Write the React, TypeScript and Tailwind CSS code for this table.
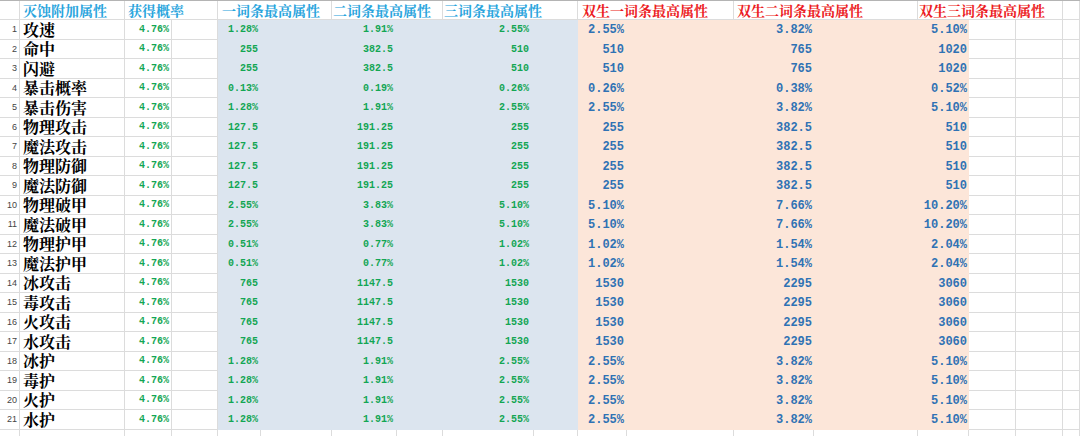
import React from 'react';

// spreadsheet column widths (px), written out as full class names
const colW = [
  'w-[20px]', 'w-[105px]', 'w-[47px]', 'w-[46px]', 'w-[43px]', 'w-[71px]',
  'w-[65px]', 'w-[46px]', 'w-[91px]', 'w-[44px]', 'w-[49px]', 'w-[107px]',
  'w-[80px]', 'w-[104px]', 'w-[51px]', 'w-[47px]', 'w-[47px]', 'w-[17px]',
];

// header cells span several columns where the text runs over
const headers = [
  { w: 'w-[20px]', text: '', cls: '' },
  { w: 'w-[105px]', text: '灭蚀附加属性', cls: 'pl-[3px] text-[#2aa5dd]' },
  { w: 'w-[93px]', text: '获得概率', cls: 'pl-[3px] text-[#2aa5dd]' },
  { w: 'w-[114px]', text: '一词条最高属性', cls: 'pl-[4px] text-[#2aa5dd]' },
  { w: 'w-[111px]', text: '二词条最高属性', cls: 'pl-[1px] text-[#2aa5dd]' },
  { w: 'w-[135px]', text: '三词条最高属性', cls: 'pl-[1px] text-[#2aa5dd]' },
  { w: 'w-[156px]', text: '双生一词条最高属性', cls: 'pl-[4px] text-[#ec1c24]' },
  { w: 'w-[184px]', text: '双生二词条最高属性', cls: 'pl-[3px] text-[#ec1c24]' },
  { w: 'w-[145px]', text: '双生三词条最高属性', cls: 'pl-[1px] text-[#ec1c24]' },
  { w: 'w-[17px]', text: '', cls: '' },
];

type Row = [string, string, string, string, string, string, string];

const rows: Row[] = [
  ['攻速', '1.28%', '1.91%', '2.55%', '2.55%', '3.82%', '5.10%'],
  ['命中', '255', '382.5', '510', '510', '765', '1020'],
  ['闪避', '255', '382.5', '510', '510', '765', '1020'],
  ['暴击概率', '0.13%', '0.19%', '0.26%', '0.26%', '0.38%', '0.52%'],
  ['暴击伤害', '1.28%', '1.91%', '2.55%', '2.55%', '3.82%', '5.10%'],
  ['物理攻击', '127.5', '191.25', '255', '255', '382.5', '510'],
  ['魔法攻击', '127.5', '191.25', '255', '255', '382.5', '510'],
  ['物理防御', '127.5', '191.25', '255', '255', '382.5', '510'],
  ['魔法防御', '127.5', '191.25', '255', '255', '382.5', '510'],
  ['物理破甲', '2.55%', '3.83%', '5.10%', '5.10%', '7.66%', '10.20%'],
  ['魔法破甲', '2.55%', '3.83%', '5.10%', '5.10%', '7.66%', '10.20%'],
  ['物理护甲', '0.51%', '0.77%', '1.02%', '1.02%', '1.54%', '2.04%'],
  ['魔法护甲', '0.51%', '0.77%', '1.02%', '1.02%', '1.54%', '2.04%'],
  ['冰攻击', '765', '1147.5', '1530', '1530', '2295', '3060'],
  ['毒攻击', '765', '1147.5', '1530', '1530', '2295', '3060'],
  ['火攻击', '765', '1147.5', '1530', '1530', '2295', '3060'],
  ['水攻击', '765', '1147.5', '1530', '1530', '2295', '3060'],
  ['冰护', '1.28%', '1.91%', '2.55%', '2.55%', '3.82%', '5.10%'],
  ['毒护', '1.28%', '1.91%', '2.55%', '2.55%', '3.82%', '5.10%'],
  ['火护', '1.28%', '1.91%', '2.55%', '2.55%', '3.82%', '5.10%'],
  ['水护', '1.28%', '1.91%', '2.55%', '2.55%', '3.82%', '5.10%'],
];

const green = "justify-end font-['Liberation_Mono',monospace] text-[10px] font-bold text-[#13a654]";
const blue = "justify-end font-['Liberation_Mono',monospace] text-[12px] font-bold text-[#2f72b4]";

function Cell({ row, idx, c }: { row: Row; idx: number; c: number }) {
  const blueFill = c >= 4 && c <= 9;
  const peachFill = c >= 10 && c <= 14;
  let base = `${colW[c]} shrink-0 flex items-center whitespace-nowrap leading-none`;
  if (blueFill) base += ' bg-[#dce5ef]';
  else if (peachFill) base += ' bg-[#fce6d9]';
  else base += ' border-r border-b border-[#dcdcdc]';

  let content: React.ReactNode = null;
  let extra = '';
  switch (c) {
    case 0:
      content = idx + 1;
      extra = "justify-end pr-[2px] font-['Liberation_Sans',sans-serif] text-[9px] text-[#444]";
      break;
    case 1:
      content = row[0];
      extra = "pl-[3px] font-['Noto_Serif_CJK_SC','Noto_Sans_CJK_SC',serif] text-[16px] font-bold text-black";
      break;
    case 2:
      content = '4.76%';
      extra = `${green} pr-[2px]`;
      break;
    case 4:
      content = row[1];
      extra = `${green} pr-[3px]`;
      break;
    case 6:
      content = row[2];
      extra = `${green} pr-[4px]`;
      break;
    case 8:
      content = row[3];
      extra = `${green} pr-[5px]`;
      break;
    case 10:
      content = row[4];
      extra = `${blue} pr-[3px]`;
      break;
    case 12:
      content = row[5];
      extra = `${blue} pr-[2px]`;
      break;
    case 14:
      content = row[6];
      extra = `${blue} pr-[2px]`;
      break;
  }
  return <div className={`${base} ${extra}`}>{content}</div>;
}

export default function App() {
  return (
    <div className="w-[1080px] h-[436px] overflow-hidden bg-white border-t border-[#b4b4b4]">
      {/* header row */}
      <div className="flex h-[19px]">
        {headers.map((h, i) => (
          <div
            key={i}
            className={`${h.w} shrink-0 flex items-center whitespace-nowrap leading-none border-r border-b border-[#dcdcdc] font-['Noto_Serif_CJK_SC','Noto_Sans_CJK_SC',serif] text-[14px] font-bold ${h.cls}`}
          >
            {h.text}
          </div>
        ))}
      </div>

      {/* data rows */}
      {rows.map((row, i) => (
        <div key={i} className={`flex ${i % 2 === 0 ? 'h-[20px]' : 'h-[19px]'}`}>
          {colW.map((_, c) => (
            <Cell key={c} row={row} idx={i} c={c} />
          ))}
        </div>
      ))}

      {/* trailing empty row */}
      <div className="flex h-[20px]">
        {colW.map((w, c) => (
          <div key={c} className={`${w} shrink-0 border-r border-b border-[#dcdcdc]`} />
        ))}
      </div>
    </div>
  );
}
